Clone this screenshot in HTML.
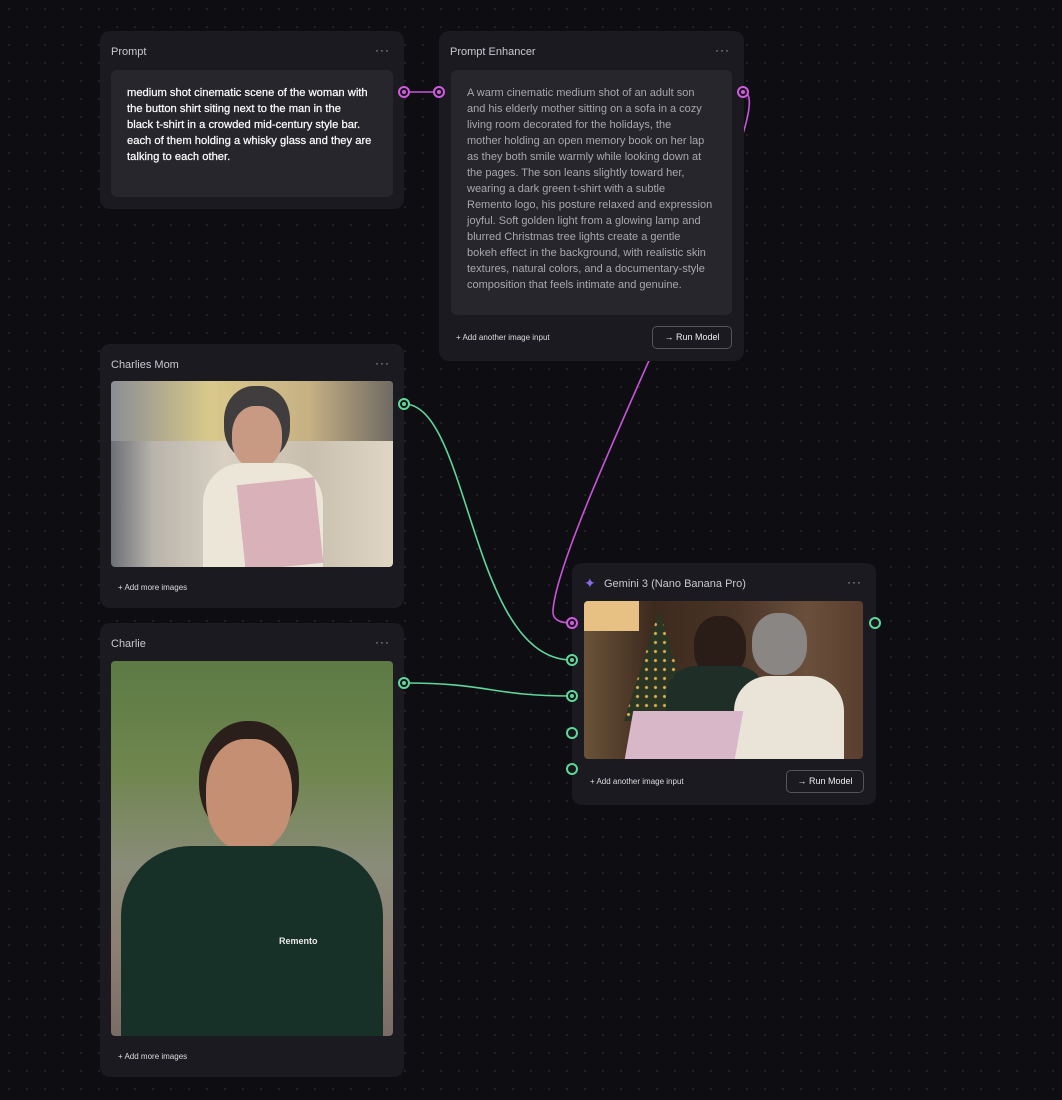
<!DOCTYPE html>
<html><head><meta charset="utf-8"><style>
*{margin:0;padding:0;box-sizing:border-box}
body{width:1062px;height:1100px;background:#0e0d12;background-image:radial-gradient(circle,#24232a 1px,transparent 1.2px);background-size:18px 18px;position:relative;overflow:hidden;font-family:"Liberation Sans",sans-serif;color:#ddd}
.card{position:absolute;background:#1b1a20;border-radius:10px}
.title{position:absolute;left:11px;top:15px;font-size:11px;color:#c9c8cf}
.dots{position:absolute;right:14px;top:12px;font-size:12px;color:#aaa;letter-spacing:1px}
.box{position:absolute;background:#27262c;border-radius:6px;padding:15px 16px;font-size:11px;line-height:16px;white-space:nowrap}
.img{position:absolute;border-radius:4px;overflow:hidden}
.small{position:absolute;font-size:8px;color:#ddd}
.btn{position:absolute;border:1px solid #55545b;border-radius:5px;font-size:9px;color:#eee;text-align:center;line-height:21px}
.port{position:absolute;width:12px;height:12px;border-radius:50%;border:2px solid;background:#17161b}
.port::after{content:"";position:absolute;left:2px;top:2px;width:4px;height:4px;border-radius:50%;background:currentColor}
.m{border-color:#d25ae0;color:#d25ae0}.g{border-color:#5fd69a;color:#5fd69a}
.g.e::after{display:none}
</style></head><body>
<svg style="position:absolute;left:0;top:0" width="1062" height="1100" fill="none" stroke-width="1.6">
<path d="M743 92 C790 92 560 520 553 610 C552 620 560 623 572 623" stroke="#c855d8"/>
<path d="M410 92 L433 92" stroke="#c855d8"/>
<path d="M404 404 C470 404 470 660 572 660" stroke="#5fd69a"/>
<path d="M404 683 C490 683 490 696 572 696" stroke="#5fd69a"/>
</svg>

<div class="card" style="left:100px;top:31px;width:304px;height:178px">
<div class="title">Prompt</div><div class="dots">···</div>
<div class="box" style="left:11px;top:39px;width:282px;height:127px;color:#fafafa;font-size:11.2px;-webkit-text-stroke:0.25px #fafafa">medium shot cinematic scene of the woman with<br>the button shirt siting next to the man in the<br>black t-shirt in a crowded mid-century style bar.<br>each of them holding a whisky glass and they are<br>talking to each other.</div>
</div>

<div class="card" style="left:439px;top:31px;width:305px;height:330px">
<div class="title">Prompt Enhancer</div><div class="dots">···</div>
<div class="box" style="left:12px;top:39px;width:281px;height:245px;color:#a8a7ad">A warm cinematic medium shot of an adult son<br>and his elderly mother sitting on a sofa in a cozy<br>living room decorated for the holidays, the<br>mother holding an open memory book on her lap<br>as they both smile warmly while looking down at<br>the pages. The son leans slightly toward her,<br>wearing a dark green t-shirt with a subtle<br>Remento logo, his posture relaxed and expression<br>joyful. Soft golden light from a glowing lamp and<br>blurred Christmas tree lights create a gentle<br>bokeh effect in the background, with realistic skin<br>textures, natural colors, and a documentary-style<br>composition that feels intimate and genuine.</div>
<div class="small" style="left:17px;top:302px">+ Add another image input</div>
<div class="btn" style="left:213px;top:295px;width:80px;height:23px">→ Run Model</div>
</div>

<div class="card" style="left:100px;top:344px;width:304px;height:264px">
<div class="title">Charlies Mom</div><div class="dots">···</div>
<div class="img" style="left:11px;top:37px;width:282px;height:186px;background:linear-gradient(90deg,#6d6f78 0%,#b9b4ac 15%,#d8d0c2 40%,#c9bfae 70%,#e0d6c6 100%)">
<div style="position:absolute;left:0;top:0;width:100%;height:60px;background:linear-gradient(90deg,#8a8d95,#d9c98a 35%,#c7b184 70%,#6f6a62)"></div>
<div style="position:absolute;left:113px;top:5px;width:66px;height:75px;border-radius:45%;background:#3f3d3d"></div>
<div style="position:absolute;left:121px;top:25px;width:50px;height:62px;border-radius:45%;background:#c89a84"></div>
<div style="position:absolute;left:92px;top:82px;width:120px;height:110px;border-radius:40px 40px 0 0;background:#ece6d8"></div>
<div style="position:absolute;left:130px;top:100px;width:78px;height:86px;background:#d9b1b8;transform:rotate(-6deg)"></div>
</div>
<div class="small" style="left:18px;top:239px">+ Add more images</div>
</div>

<div class="card" style="left:100px;top:623px;width:304px;height:454px">
<div class="title">Charlie</div><div class="dots">···</div>
<div class="img" style="left:11px;top:38px;width:282px;height:375px;background:linear-gradient(180deg,#5d7a45 0%,#70864f 30%,#8a8c7a 55%,#8d7f73 75%,#7a6d66 100%)">
<div style="position:absolute;left:88px;top:60px;width:100px;height:120px;border-radius:48%;background:#2a1f1a"></div>
<div style="position:absolute;left:95px;top:78px;width:86px;height:112px;border-radius:45%;background:#c58f73"></div>
<div style="position:absolute;left:10px;top:185px;width:262px;height:200px;border-radius:70px 70px 0 0;background:#173028"></div>
<div style="position:absolute;left:168px;top:275px;font-size:9px;color:#e8e8e8;font-weight:bold">Remento</div>
</div>
<div class="small" style="left:18px;top:429px">+ Add more images</div>
</div>

<div class="card" style="left:572px;top:563px;width:304px;height:242px">
<div style="position:absolute;left:12px;top:12px;color:#8a6de8;font-size:14px">✦</div>
<div class="title" style="left:32px">Gemini 3 (Nano Banana Pro)</div><div class="dots">···</div>
<div class="img" style="left:12px;top:38px;width:279px;height:158px;background:linear-gradient(90deg,#6b5339 0%,#3d2a1e 25%,#4a3527 55%,#6a4f3c 80%,#5a3e2d 100%)">
<div style="position:absolute;left:0;top:0;width:55px;height:30px;background:#e7c083"></div>
<div style="position:absolute;left:40px;top:10px;width:70px;height:110px;background:radial-gradient(circle,#e5b45a 1px,transparent 2px) 0 0/9px 9px,#2b3523;clip-path:polygon(50% 0,100% 100%,0 100%)"></div>
<div style="position:absolute;left:110px;top:15px;width:52px;height:62px;border-radius:45%;background:#2a1c16"></div>
<div style="position:absolute;left:82px;top:65px;width:100px;height:95px;border-radius:30px 30px 0 0;background:#1f2e27"></div>
<div style="position:absolute;left:168px;top:12px;width:55px;height:62px;border-radius:45%;background:#8a8684"></div>
<div style="position:absolute;left:150px;top:75px;width:110px;height:85px;border-radius:35px 35px 0 0;background:#eae3d7"></div>
<div style="position:absolute;left:45px;top:110px;width:110px;height:48px;background:#d7b7c8;transform:skewX(-10deg)"></div>
</div>
<div class="small" style="left:18px;top:214px">+ Add another image input</div>
<div class="btn" style="left:214px;top:207px;width:78px;height:23px">→ Run Model</div>
</div>

<div class="port m" style="left:398px;top:86px"></div>
<div class="port m" style="left:433px;top:86px"></div>
<div class="port m" style="left:737px;top:86px"></div>
<div class="port g" style="left:398px;top:398px"></div>
<div class="port g" style="left:398px;top:677px"></div>
<div class="port m" style="left:566px;top:617px"></div>
<div class="port g" style="left:566px;top:654px"></div>
<div class="port g" style="left:566px;top:690px"></div>
<div class="port g e" style="left:566px;top:727px"></div>
<div class="port g e" style="left:566px;top:763px"></div>
<div class="port g e" style="left:869px;top:617px"></div>
</body></html>
